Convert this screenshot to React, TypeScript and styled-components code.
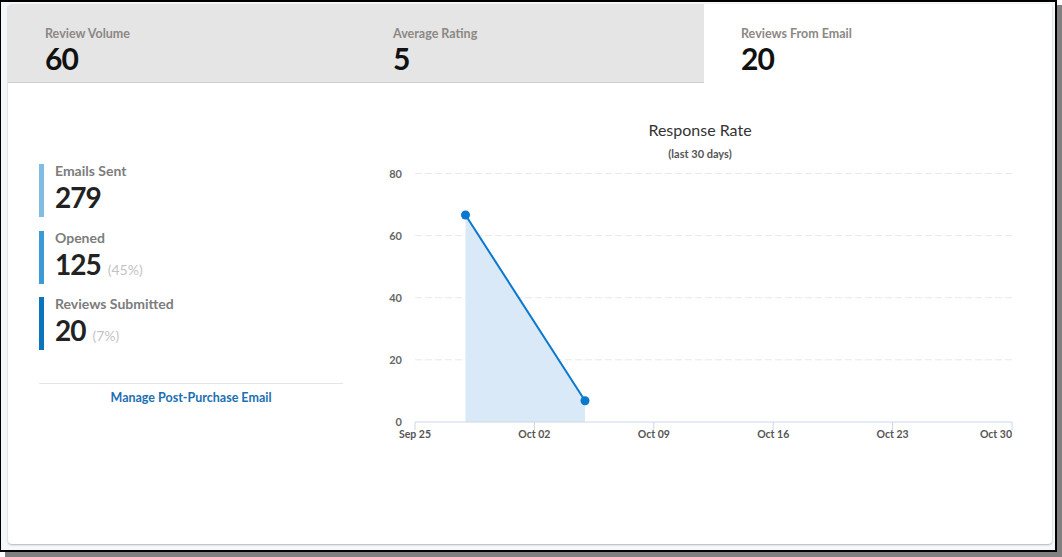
import React from "react";
import styled, { createGlobalStyle } from "styled-components";

const Global = createGlobalStyle`
  html, body { margin: 0; padding: 0; background: #ffffff; }
  body { font-family: Lato, "Open Sans", Arial, sans-serif; }
  * { box-sizing: border-box; }
`;

const Page = styled.div`
  width: 1062px;
  height: 557px;
  background:
    linear-gradient(#808080, #808080) 5px 552px / 1057px 5px no-repeat,
    linear-gradient(#808080, #808080) 1057px 5px / 5px 552px no-repeat,
    #ffffff;
`;

const Frame = styled.div`
  width: 1057px;
  height: 552px;
  border-style: solid;
  border-color: #000;
  border-width: 2px 2px 2px 1px;
  background: #f5f8f9;
  padding: 2px 3px 6px 7px;
  display: flex;
`;

const Card = styled.div`
  flex: 1;
  background: #fff;
  border-radius: 4px;
  box-shadow: 0 1px 2px rgba(0, 0, 0, 0.28);
  display: flex;
  flex-direction: column;
  overflow: hidden;
`;

const Tabs = styled.div`
  display: grid;
  grid-template-columns: repeat(3, 1fr);
  height: 79px;
`;

const Tab = styled.div<{ $active?: boolean }>`
  background: ${(p) => (p.$active ? "#ffffff" : "#e5e5e5")};
  border-bottom: 1px solid ${(p) => (p.$active ? "transparent" : "#cdcdcd")};
  padding: 21.5px 0 0 37px;
  display: flex;
  flex-direction: column;
`;

const TabLabel = styled.div`
  font-size: 12.5px;
  line-height: 16px;
  font-weight: 700;
  color: #8c8884;
`;

const TabValue = styled.div`
  font-size: 30px;
  line-height: 30px;
  font-weight: 700;
  color: #111;
  letter-spacing: -1px;
  margin-top: 1.5px;
`;

const Body = styled.div`
  display: flex;
  padding: 27px 0 0 31px;
  gap: 17px;
`;

const LeftCol = styled.div`
  width: 304px;
  padding-top: 54px;
  display: flex;
  flex-direction: column;
`;

const Stats = styled.div`
  display: flex;
  flex-direction: column;
  gap: 13.5px;
`;

const Stat = styled.div`
  display: flex;
  height: 53px;
`;

const Bar = styled.div<{ $color: string }>`
  width: 5px;
  background: ${(p) => p.$color};
`;

const StatText = styled.div`
  padding-left: 11px;
  display: flex;
  flex-direction: column;
  margin-top: -1px;
`;

const StatLabel = styled.div`
  font-size: 14px;
  line-height: 16px;
  font-weight: 700;
  color: #7c7c7c;
`;

const StatValue = styled.div`
  font-size: 28px;
  line-height: 28px;
  font-weight: 700;
  color: #222;
  letter-spacing: -1px;
  margin-top: 4px;
  display: flex;
  align-items: baseline;
`;

const Pct = styled.span`
  font-size: 14px;
  font-weight: 400;
  letter-spacing: 0;
  color: #c4c4c4;
  margin-left: 7px;
`;

const Divider = styled.div`
  margin-top: 33px;
  border-top: 1px solid #e4e4e4;
  padding-top: 2px;
  text-align: center;
`;

const Link = styled.a`
  font-size: 12.5px;
  line-height: 16px;
  font-weight: 700;
  color: #1c6fb3;
  text-decoration: none;
`;

const ChartSvg = styled.svg`
  display: block;
  font-family: Lato, "Open Sans", Arial, sans-serif;
`;

const tabs = [
  { label: "Review Volume", value: "60" },
  { label: "Average Rating", value: "5" },
  { label: "Reviews From Email", value: "20", active: true },
];

const stats = [
  { label: "Emails Sent", value: "279", color: "#7fbde3" },
  { label: "Opened", value: "125", pct: "(45%)", color: "#3c9ad7" },
  { label: "Reviews Submitted", value: "20", pct: "(7%)", color: "#0b74bd" },
];

const gridYs = [63.5, 125.6, 187.7, 249.8];
const yLabels = ["80", "60", "40", "20", "0"];
const ticks = [55, 174.4, 293.8, 413.2, 532.6, 652];
const xLabels = ["Sep 25", "Oct 02", "Oct 09", "Oct 16", "Oct 23", "Oct 30"];

function Chart() {
  const p1 = { x: 105.5, y: 105 };
  const p2 = { x: 225, y: 290.7 };
  const axisY = 312;
  return (
    <ChartSvg width={680} height={340} viewBox="0 0 680 340">
      <text x={340} y={26} textAnchor="middle" fontSize={16} fill="#333">
        Response Rate
      </text>
      <text x={340} y={47.5} textAnchor="middle" fontSize={11} fontWeight={700} fill="#555">
        (last 30 days)
      </text>
      {gridYs.map((y) => (
        <line key={y} x1={55} x2={652} y1={y} y2={y} stroke="#e9e9e9" strokeWidth={1} strokeDasharray="7 3" />
      ))}
      {[...gridYs, axisY].map((y, i) => (
        <text key={i} x={42} y={y + 4} textAnchor="end" fontSize={11} fontWeight={700} fill="#666">
          {yLabels[i]}
        </text>
      ))}
      <polygon
        points={`${p1.x},${p1.y} ${p2.x},${p2.y} ${p2.x},${axisY} ${p1.x},${axisY}`}
        fill="#d9e9f7"
      />
      <line x1={55} x2={652} y1={axisY} y2={axisY} stroke="#ccd6eb" strokeWidth={1} />
      {ticks.map((x) => (
        <line key={x} x1={x} x2={x} y1={axisY} y2={axisY + 8} stroke="#ccd6eb" strokeWidth={1} />
      ))}
      {ticks.map((x, i) => (
        <text
          key={i}
          x={x}
          y={328}
          textAnchor={i === ticks.length - 1 ? "end" : "middle"}
          fontSize={10.5}
          fontWeight={700}
          fill="#555"
        >
          {xLabels[i]}
        </text>
      ))}
      <line x1={p1.x} y1={p1.y} x2={p2.x} y2={p2.y} stroke="#0a78cc" strokeWidth={2} />
      <circle cx={p1.x} cy={p1.y} r={4.5} fill="#0a78cc" />
      <circle cx={p2.x} cy={p2.y} r={4.5} fill="#0a78cc" />
    </ChartSvg>
  );
}

export default function App() {
  return (
    <>
      <Global />
      <Page>
        <Frame>
          <Card>
            <Tabs>
              {tabs.map((t) => (
                <Tab key={t.label} $active={t.active}>
                  <TabLabel>{t.label}</TabLabel>
                  <TabValue>{t.value}</TabValue>
                </Tab>
              ))}
            </Tabs>
            <Body>
              <LeftCol>
                <Stats>
                  {stats.map((s) => (
                    <Stat key={s.label}>
                      <Bar $color={s.color} />
                      <StatText>
                        <StatLabel>{s.label}</StatLabel>
                        <StatValue>
                          {s.value}
                          {s.pct && <Pct>{s.pct}</Pct>}
                        </StatValue>
                      </StatText>
                    </Stat>
                  ))}
                </Stats>
                <Divider>
                  <Link href="#">Manage Post-Purchase Email</Link>
                </Divider>
              </LeftCol>
              <Chart />
            </Body>
          </Card>
        </Frame>
      </Page>
    </>
  );
}
